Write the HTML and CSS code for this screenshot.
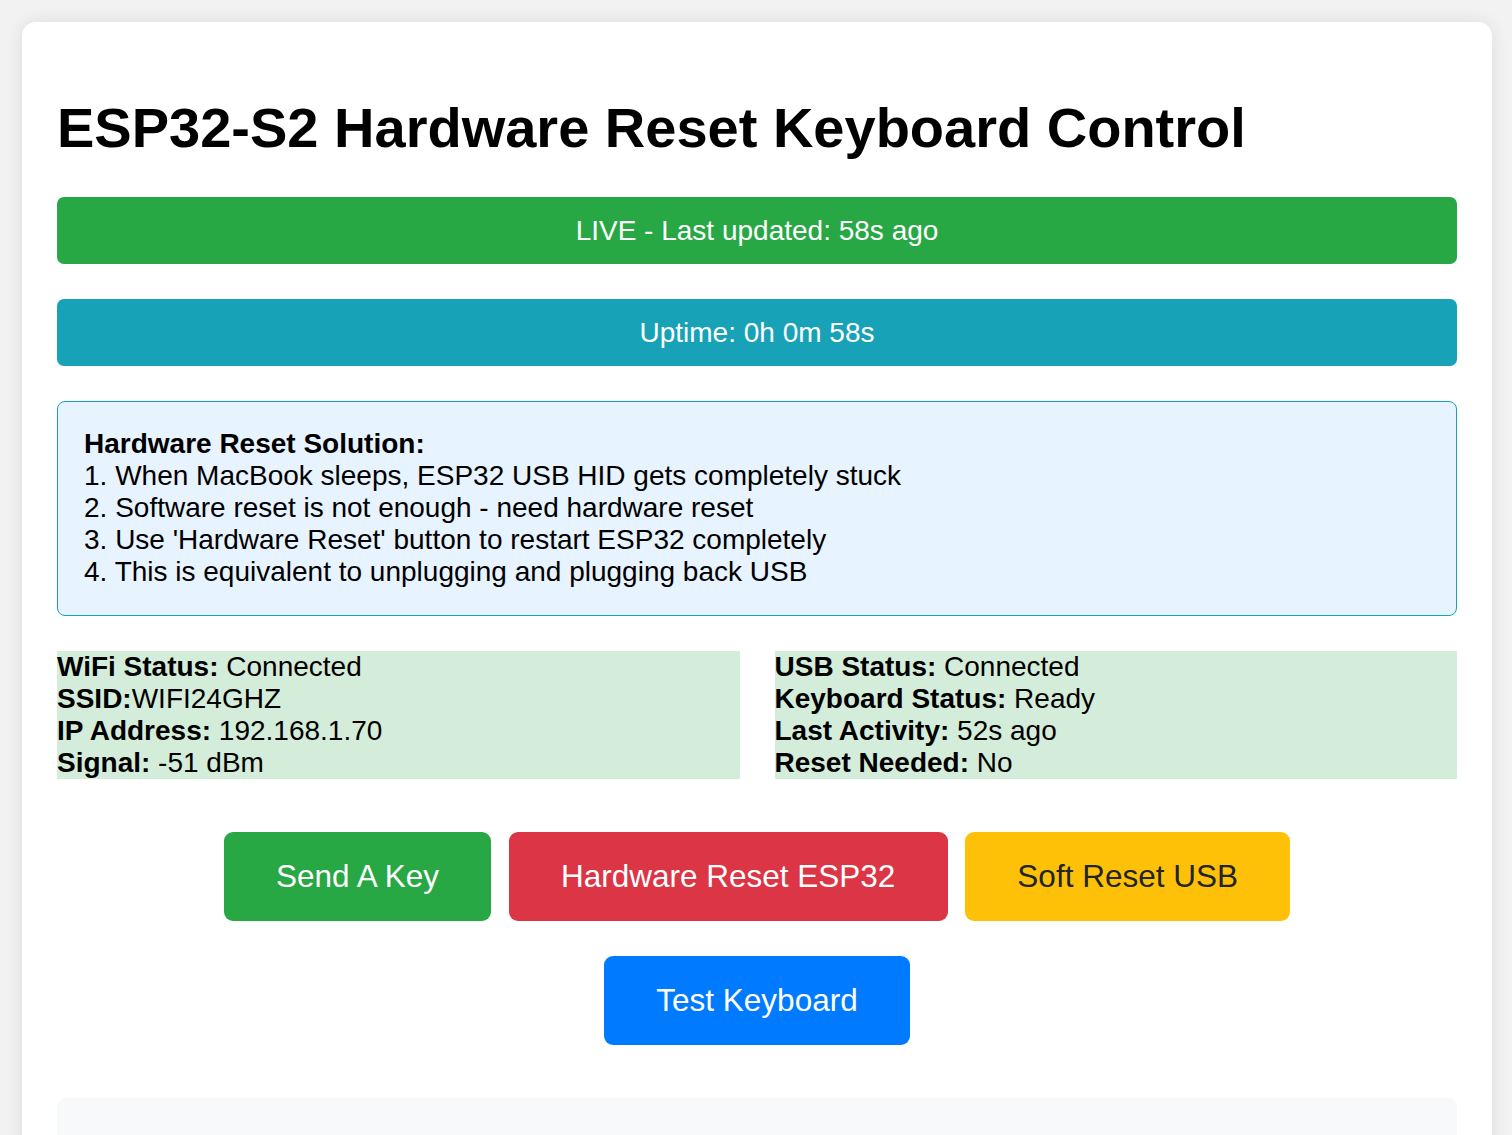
FILE: index.html
```html
<!DOCTYPE html>
<html lang="en">
<head>
<meta charset="utf-8">
<title>ESP32-S2 Hardware Reset Keyboard Control</title>
<link rel="stylesheet" href="styles.css">
</head>
<body>
<div class="container">
  <h1 class="title">ESP32-S2 Hardware Reset Keyboard Control</h1>
  <div class="bar bar-live">LIVE - Last updated: 58s ago</div>
  <div class="bar bar-uptime">Uptime: 0h 0m 58s</div>
  <div class="info">
    <strong>Hardware Reset Solution:</strong><br>
    1. When MacBook sleeps, ESP32 USB HID gets completely stuck<br>
    2. Software reset is not enough - need hardware reset<br>
    3. Use 'Hardware Reset' button to restart ESP32 completely<br>
    4. This is equivalent to unplugging and plugging back USB
  </div>
  <div class="status-grid">
    <div class="status">
      <strong>WiFi Status:</strong> Connected<br>
      <strong>SSID:</strong>WIFI24GHZ<br>
      <strong>IP Address:</strong> 192.168.1.70<br>
      <strong>Signal:</strong> -51 dBm
    </div>
    <div class="status">
      <strong>USB Status:</strong> Connected<br>
      <strong>Keyboard Status:</strong> Ready<br>
      <strong>Last Activity:</strong> 52s ago<br>
      <strong>Reset Needed:</strong> No
    </div>
  </div>
  <div class="actions">
    <button class="btn btn-green">Send A Key</button>
    <button class="btn btn-red">Hardware Reset ESP32</button>
    <button class="btn btn-yellow">Soft Reset USB</button>
    <button class="btn btn-blue">Test Keyboard</button>
  </div>
  <div class="log"></div>
</div>
</body>
</html>
```
FILE: styles.css
```css
html, body {
  margin: 0;
  padding: 0;
}
body {
  background: #f2f2f2;
  font-family: "Liberation Sans", Arial, sans-serif;
  font-size: 28px;
  color: #000;
  padding: 22px 20px 0 22px;
}
.container {
  background: #fff;
  max-width: 1400px;
  padding: 35px 35px 40px;
  border-radius: 14px;
  box-shadow: 0 0 18px rgba(0, 0, 0, 0.09);
}
.title {
  font-size: 56px;
  font-weight: bold;
  margin: 37.5px 0;
  line-height: normal;
}
.bar {
  color: #fff;
  text-align: center;
  padding: 17.5px;
  line-height: 32px;
  border-radius: 7px;
  margin-bottom: 35px;
}
.bar-live { background: #28a745; }
.bar-uptime { background: #17a2b8; }
.info {
  background: #e7f3fe;
  border: 1px solid #17a2b8;
  border-radius: 8px;
  padding: 26px 26px 26.5px;
  line-height: 32px;
  margin-bottom: 35.5px;
}
.status-grid {
  display: grid;
  grid-template-columns: 1fr 1fr;
  column-gap: 35px;
  margin-bottom: 35px;
}
.status {
  background: #d4edda;
  line-height: 32px;
}
.actions {
  display: flex;
  flex-wrap: wrap;
  justify-content: center;
}
.btn {
  font-family: "Liberation Sans", Arial, sans-serif;
  font-size: 31.5px;
  line-height: 36.5px;
  padding: 26.25px 52.25px;
  margin: 17.5px 8.75px;
  border: none;
  border-radius: 9px;
  color: #fff;
}
.btn-green { background: #28a745; }
.btn-red { background: #dc3545; }
.btn-yellow { background: #ffc107; color: #212529; }
.btn-blue { background: #007bff; }
.log {
  margin-top: 36px;
  background: #f8f9fa;
  border-radius: 9px;
  height: 200px;
}
```
